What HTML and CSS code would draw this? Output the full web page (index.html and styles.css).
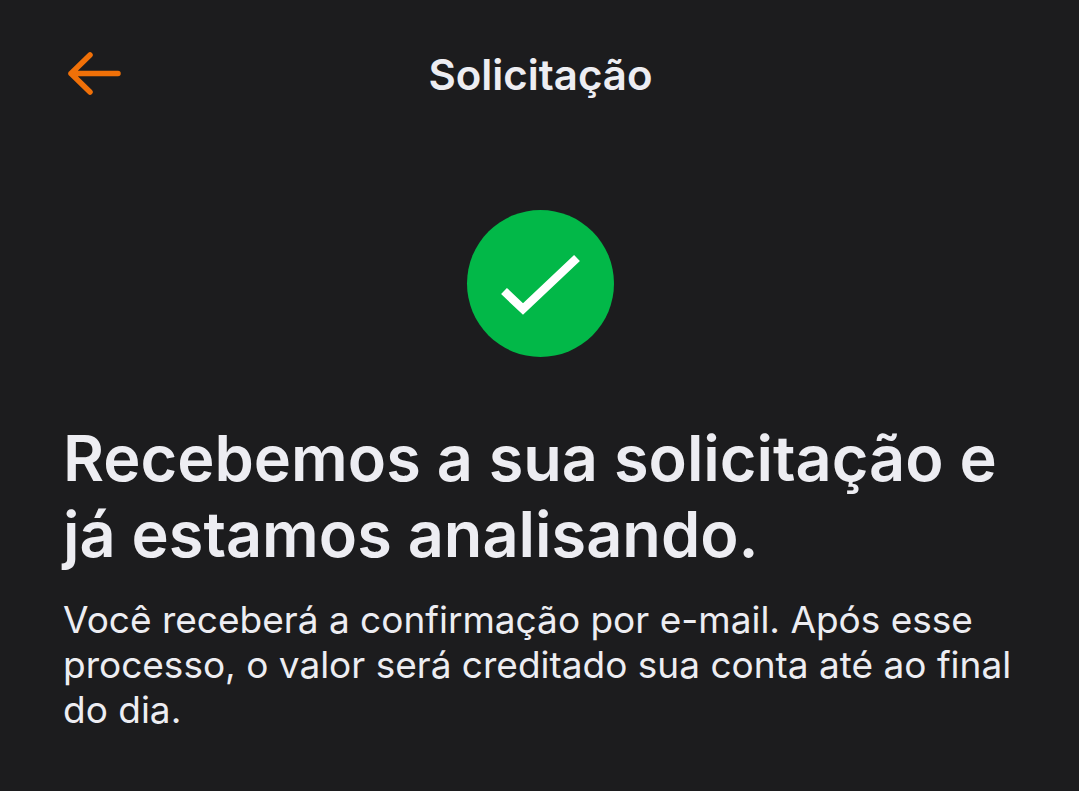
FILE: index.html
```html
<!DOCTYPE html>
<html lang="pt-BR">
<head>
<meta charset="utf-8">
<meta name="viewport" content="width=device-width, initial-scale=1">
<title>Solicitação</title>
<link rel="stylesheet" href="styles.css">
</head>
<body>
<header class="topbar">
<button class="back" type="button" aria-label="Voltar">
<svg class="back-icon" viewBox="0 0 56 48" aria-hidden="true"><path stroke-width="5.500" d="M54 22.500H7M26 4L7 22.500L26 41"/></svg>
</button>
<h1 class="title">Solicitação</h1>
</header>
<main class="content">
<svg class="status" viewBox="0 0 148 148" role="img" aria-label="Sucesso"><circle cx="74.500" cy="74.500" r="73.500"/><path stroke-width="8.500" d="M38 82L57 100L111 49"/></svg>
<h2 class="headline">Recebemos a sua solicitação e já estamos analisando.</h2>
<p class="message">Você receberá a confirmação por e-mail. Após esse processo, o valor será creditado sua conta até ao final do dia.</p>
</main>
</body>
</html>
```
FILE: styles.css
```css
body {
  margin: 0;
  min-height: 100vh;
  background: #1c1c1e;
  color: #ededf2;
  font-family: Inter, "Liberation Sans", sans-serif;
}

.topbar {
  display: grid;
  grid-template-columns: 56px 1fr 56px;
  align-items: center;
  padding: 47px 62px 0 64px;
}

.back {
  display: flex;
  padding: 0;
  border: 0;
  background: none;
  cursor: pointer;
}

.back-icon {
  width: 56px;
  height: 48px;
  overflow: visible;
  fill: none;
  stroke: #f07008;
  stroke-linecap: round;
  stroke-linejoin: round;
}

.title {
  margin: 0;
  font-size: 42px;
  line-height: 56px;
  font-weight: 600;
  text-align: center;
}

.content {
  padding: 106px 63px 56px;
}

.status {
  display: block;
  width: 148px;
  height: 148px;
  margin: 0 auto 63px;
  overflow: visible;
}

.status circle {
  fill: #02b848;
}

.status path {
  fill: none;
  stroke: #fff;
}

.headline {
  margin: 0;
  font-size: 63px;
  line-height: 76px;
  font-weight: 600;
}

.message {
  margin: 25px 0 0;
  font-size: 37px;
  line-height: 45px;
}
```
